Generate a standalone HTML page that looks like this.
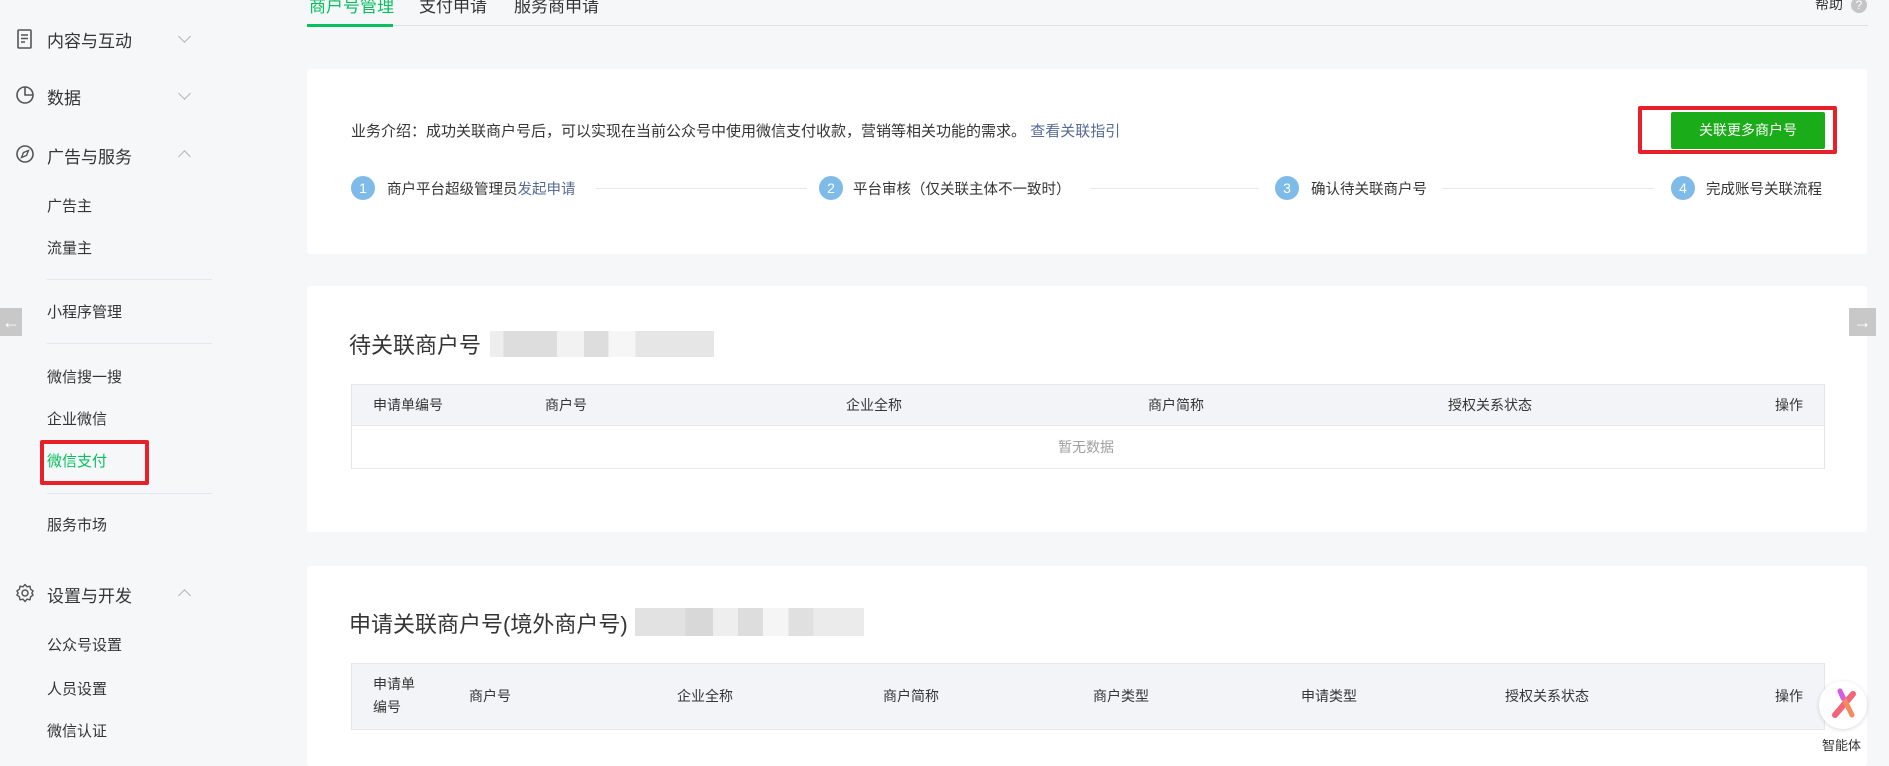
<!DOCTYPE html>
<html><head><meta charset="utf-8"><style>
*{margin:0;padding:0;box-sizing:border-box}
body{width:1889px;height:749px;overflow:hidden;background:#f6f7f9;font-family:"Liberation Sans","Noto Sans CJK SC",sans-serif;color:#353535;position:relative}
.a{position:absolute;white-space:nowrap}
.h{font-size:17px;color:#353535}
.s{font-size:15px;color:#353535}
.div{position:absolute;left:47px;width:165px;height:1px;background:#e7e7eb}
.chev{position:absolute;left:180px;width:9px;height:9px;border-right:1.3px solid #b5b5b5;border-bottom:1.3px solid #b5b5b5}
.card{position:absolute;left:307px;width:1560px;background:#fff;border-radius:3px}
.circ{position:absolute;width:24px;height:24px;border-radius:50%;background:#7fbbe8;color:#fff;font-size:14px;text-align:center;line-height:24px}
.st{font-size:14.5px;color:#353535}
.ln{position:absolute;height:1px;background:#e4e8eb}
.th{font-size:14px;color:#353535}
</style></head><body>

<!-- sidebar -->
<svg class="a" style="left:16px;top:29px" width="18" height="20" viewBox="0 0 18 20"><rect x="2" y="1" width="13" height="18" rx="1" fill="none" stroke="#555" stroke-width="1.6"/><path d="M5 6h7M5 9.5h7M5 13h4" stroke="#555" stroke-width="1.5"/></svg>
<div class="a h" style="left:47px;top:27px">内容与互动</div>
<div class="chev" style="top:32px;transform:rotate(45deg)"></div>
<svg class="a" style="left:15px;top:85px" width="20" height="20" viewBox="0 0 20 20"><circle cx="10" cy="10" r="8" fill="none" stroke="#555" stroke-width="1.6"/><path d="M10 2v8h8" fill="none" stroke="#555" stroke-width="1.6"/></svg>
<div class="a h" style="left:47px;top:84px">数据</div>
<div class="chev" style="top:89px;transform:rotate(45deg)"></div>
<svg class="a" style="left:15px;top:144px" width="20" height="20" viewBox="0 0 20 20"><circle cx="10" cy="10" r="8" fill="none" stroke="#555" stroke-width="1.6"/><path d="M13.5 6.5l-2 5-5 2 2-5z" fill="none" stroke="#555" stroke-width="1.4"/></svg>
<div class="a h" style="left:47px;top:143px">广告与服务</div>
<div class="chev" style="top:152px;transform:rotate(-135deg)"></div>
<div class="a s" style="left:47px;top:195px">广告主</div>
<div class="a s" style="left:47px;top:237px">流量主</div>
<div class="div" style="top:279px"></div>
<div class="a s" style="left:47px;top:301px">小程序管理</div>
<div class="div" style="top:343px"></div>
<div class="a s" style="left:47px;top:366px">微信搜一搜</div>
<div class="a s" style="left:47px;top:408px">企业微信</div>
<div class="a s" style="left:47px;top:450px;color:#07c160">微信支付</div>
<div class="a" style="left:40px;top:440px;width:109px;height:45px;border:4px solid #e8202a;border-radius:2px"></div>
<div class="div" style="top:493px"></div>
<div class="a s" style="left:47px;top:514px">服务市场</div>
<svg class="a" style="left:15px;top:583px" width="20" height="20" viewBox="0 0 20 20"><circle cx="10" cy="10" r="3" fill="none" stroke="#555" stroke-width="1.5"/><path d="M10 1.5l2 2.3 3-.6.6 3 2.5 1.8-1.3 2 1.3 2-2.5 1.8-.6 3-3-.6-2 2.3-2-2.3-3 .6-.6-3L1.9 12l1.3-2-1.3-2 2.5-1.8.6-3 3 .6z" fill="none" stroke="#555" stroke-width="1.4" stroke-linejoin="round"/></svg>
<div class="a h" style="left:47px;top:582px">设置与开发</div>
<div class="chev" style="top:591px;transform:rotate(-135deg)"></div>
<div class="a s" style="left:47px;top:634px">公众号设置</div>
<div class="a s" style="left:47px;top:678px">人员设置</div>
<div class="a s" style="left:47px;top:720px">微信认证</div>

<!-- tabs -->
<div class="a" style="left:309px;top:-8px;font-size:17px;color:#07c160">商户号管理</div>
<div class="a" style="left:419px;top:-8px;font-size:17px">支付申请</div>
<div class="a" style="left:514px;top:-8px;font-size:17px">服务商申请</div>
<div class="a" style="left:307px;top:25px;width:1561px;height:1px;background:#e0e1e2"></div>
<div class="a" style="left:307px;top:24px;width:86px;height:3px;background:#07c160"></div>
<div class="a" style="left:1815px;top:-6px;font-size:14px">帮助</div>
<div class="a" style="left:1851px;top:-3px;width:16px;height:16px;border-radius:50%;background:#c5c5c5;color:#fff;font-size:12px;text-align:center;line-height:16px">?</div>

<!-- card1 -->
<div class="card" style="top:69px;height:185px"></div>
<div class="a" style="left:351px;top:120px;font-size:15px">业务介绍：成功关联商户号后，可以实现在当前公众号中使用微信支付收款，营销等相关功能的需求。 <span style="color:#576b95">查看关联指引</span></div>
<div class="a" style="left:1671px;top:112px;width:154px;height:37px;background:#1aad19;color:#fff;font-size:14px;text-align:center;line-height:37px;border-radius:2px">关联更多商户号</div>
<div class="a" style="left:1638px;top:106px;width:199px;height:48px;border:4px solid #e8202a;border-radius:2px"></div>
<div class="circ" style="left:351px;top:176px">1</div>
<div class="a st" style="left:387px;top:178px">商户平台超级管理员<span style="color:#576b95">发起申请</span></div>
<div class="ln" style="left:596px;top:188px;width:211px"></div>
<div class="circ" style="left:819px;top:176px">2</div>
<div class="a st" style="left:853px;top:178px">平台审核（仅关联主体不一致时）</div>
<div class="ln" style="left:1090px;top:188px;width:169px"></div>
<div class="circ" style="left:1275px;top:176px">3</div>
<div class="a st" style="left:1311px;top:178px">确认待关联商户号</div>
<div class="ln" style="left:1442px;top:188px;width:212px"></div>
<div class="circ" style="left:1671px;top:176px">4</div>
<div class="a st" style="left:1706px;top:178px">完成账号关联流程</div>

<!-- card2 -->
<div class="card" style="top:286px;height:246px"></div>
<div class="a" style="left:349px;top:328px;font-size:22px">待关联商户号</div>
<div class="a" style="left:490px;top:331px;width:224px;height:26px;background:linear-gradient(90deg,#eee 0 6%,#ddd 6% 30%,#f2f2f2 30% 42%,#ddd 42% 53%,#f6f6f6 53% 65%,#e6e6e6 65% 100%)"></div>
<div class="a" style="left:351px;top:384px;width:1474px;height:85px;border:1px solid #e7e7eb"></div>
<div class="a" style="left:351px;top:384px;width:1474px;height:42px;background:#f3f4f7;border:1px solid #e7e7eb"></div>
<div class="a th" style="left:373px;top:395px">申请单编号</div>
<div class="a th" style="left:545px;top:395px">商户号</div>
<div class="a th" style="left:846px;top:395px">企业全称</div>
<div class="a th" style="left:1148px;top:395px">商户简称</div>
<div class="a th" style="left:1448px;top:395px">授权关系状态</div>
<div class="a th" style="left:1775px;top:395px">操作</div>
<div class="a" style="left:1058px;top:437px;font-size:14px;color:#a0a0a0">暂无数据</div>

<!-- card3 -->
<div class="card" style="top:566px;height:200px"></div>
<div class="a" style="left:349px;top:607px;font-size:22px">申请关联商户号(境外商户号)</div>
<div class="a" style="left:635px;top:608px;width:229px;height:28px;background:linear-gradient(90deg,#e2e2e2 0 22%,#d8d8d8 22% 34%,#eee 34% 45%,#ddd 45% 56%,#f5f5f5 56% 67%,#e0e0e0 67% 78%,#ebebeb 78% 100%)"></div>
<div class="a" style="left:351px;top:663px;width:1474px;height:67px;background:#f3f4f7;border:1px solid #e7e7eb"></div>
<div class="a th" style="left:373px;top:673px;line-height:23px">申请单<br>编号</div>
<div class="a th" style="left:469px;top:686px">商户号</div>
<div class="a th" style="left:677px;top:686px">企业全称</div>
<div class="a th" style="left:883px;top:686px">商户简称</div>
<div class="a th" style="left:1093px;top:686px">商户类型</div>
<div class="a th" style="left:1301px;top:686px">申请类型</div>
<div class="a th" style="left:1505px;top:686px">授权关系状态</div>
<div class="a th" style="left:1775px;top:686px">操作</div>

<!-- arrows -->
<div class="a" style="left:0;top:308px;width:22px;height:28px;background:#c8c8c8;color:#fff;font-size:18px;line-height:28px;text-align:center">←</div>
<div class="a" style="left:1849px;top:308px;width:27px;height:28px;background:#c8c8c8;color:#fff;font-size:18px;line-height:28px;text-align:center">→</div>

<!-- floating -->
<div class="a" style="left:1819px;top:681px;width:48px;height:48px;border-radius:50%;background:#fff;box-shadow:0 1px 4px rgba(0,0,0,.15)"></div>
<svg class="a" style="left:1823px;top:685px" width="40" height="40" viewBox="0 0 40 40"><path d="M30 9L12 30" stroke="#f4657a" stroke-width="6" stroke-linecap="round"/><path d="M17 6l12 24" stroke="#f58a5a" stroke-width="5" stroke-linecap="round"/><path d="M17 6l3 7" stroke="#d45ce8" stroke-width="5" stroke-linecap="round"/></svg>
<div class="a" style="left:1822px;top:735px;font-size:13px;color:#333">智能体</div>
</body></html>
